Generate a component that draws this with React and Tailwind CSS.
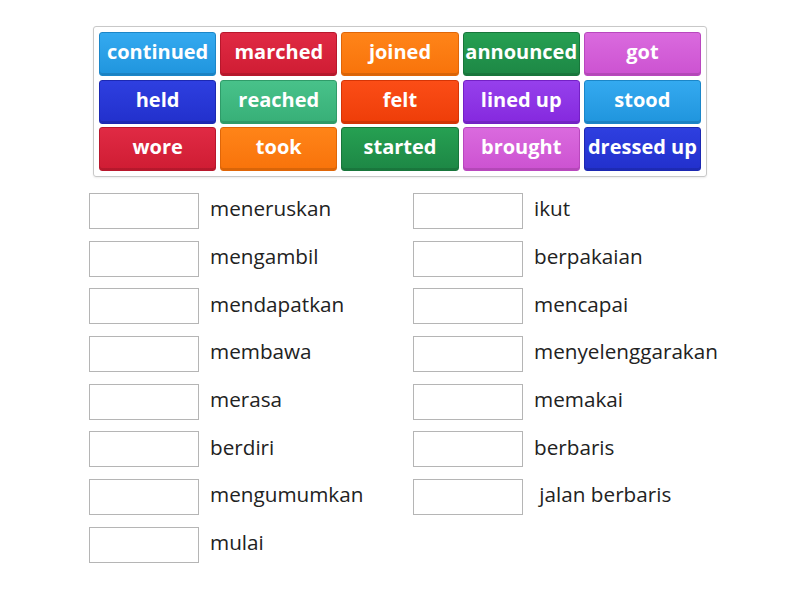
import React from "react";

const tiles = [
  { word: "continued", color: "sky" },
  { word: "marched", color: "red" },
  { word: "joined", color: "orange" },
  { word: "announced", color: "green" },
  { word: "got", color: "orchid" },
  { word: "held", color: "blue" },
  { word: "reached", color: "teal" },
  { word: "felt", color: "flame" },
  { word: "lined up", color: "purple" },
  { word: "stood", color: "sky" },
  { word: "wore", color: "red" },
  { word: "took", color: "orange" },
  { word: "started", color: "green" },
  { word: "brought", color: "orchid" },
  { word: "dressed up", color: "blue" },
];

const colorClass = {
  sky: "bg-gradient-to-b from-[#34aaf0] to-[#1f95dd] border-[#1b86c8]",
  red: "bg-gradient-to-b from-[#e02a44] to-[#cf1c33] border-[#b8172c]",
  orange: "bg-gradient-to-b from-[#ff8418] to-[#f8730a] border-[#e06608]",
  green: "bg-gradient-to-b from-[#26a052] to-[#1d8745] border-[#18763b]",
  orchid: "bg-gradient-to-b from-[#da6ade] to-[#cc52d1] border-[#b947be]",
  blue: "bg-gradient-to-b from-[#2e3fe0] to-[#2230cc] border-[#1c28b2]",
  teal: "bg-gradient-to-b from-[#48c28a] to-[#37af77] border-[#2f9c69]",
  flame: "bg-gradient-to-b from-[#fb4d16] to-[#ee3d08] border-[#d53506]",
  purple: "bg-gradient-to-b from-[#9640ec] to-[#8528de] border-[#7420c6]",
};

const leftItems = [
  "meneruskan",
  "mengambil",
  "mendapatkan",
  "membawa",
  "merasa",
  "berdiri",
  "mengumumkan",
  "mulai",
];

const rightItems = [
  "ikut",
  "berpakaian",
  "mencapai",
  "menyelenggarakan",
  "memakai",
  "berbaris",
  "\u00a0jalan berbaris",
];

const Tile = ({ word, color }) => (
  <div
    className={`h-[44px] rounded-[3px] border ${colorClass[color]} flex items-center justify-center pb-[4px] text-white font-bold text-[20px] leading-none shadow-[inset_0_-2px_0_rgba(0,0,0,0.12)] whitespace-nowrap`}
  >
    {word}
  </div>
);

const Row = ({ label }) => (
  <div className="flex items-center h-[36px]">
    <div className="w-[110px] h-[36px] border border-[#b5b5b5] bg-white shrink-0" />
    <span className="ml-[11px] pb-[5px] text-[20.7px] text-[#222] leading-none whitespace-nowrap">
      {label}
    </span>
  </div>
);

export default function App() {
  return (
    <div
      className="w-[800px] h-[600px] bg-white overflow-hidden"
      style={{ fontFamily: '"Open Sans", "Noto Sans", sans-serif' }}
    >
      <div className="pt-[26px] pl-[93px]">
        <div className="w-[614px] border border-[#c8c8c8] rounded-[3px] p-[5px] shadow-[0_1px_2px_rgba(0,0,0,0.08)]">
          <div className="grid grid-cols-5 gap-x-[4px] gap-y-[3.5px]">
            {tiles.map((t, i) => (
              <Tile key={i} word={t.word} color={t.color} />
            ))}
          </div>
        </div>
      </div>

      <div className="flex pl-[89px] mt-[16px]">
        <div className="w-[324px] flex flex-col gap-[11.7px]">
          {leftItems.map((l, i) => (
            <Row key={i} label={l} />
          ))}
        </div>
        <div className="w-[324px] flex flex-col gap-[11.7px]">
          {rightItems.map((l, i) => (
            <Row key={i} label={l} />
          ))}
        </div>
      </div>
    </div>
  );
}
